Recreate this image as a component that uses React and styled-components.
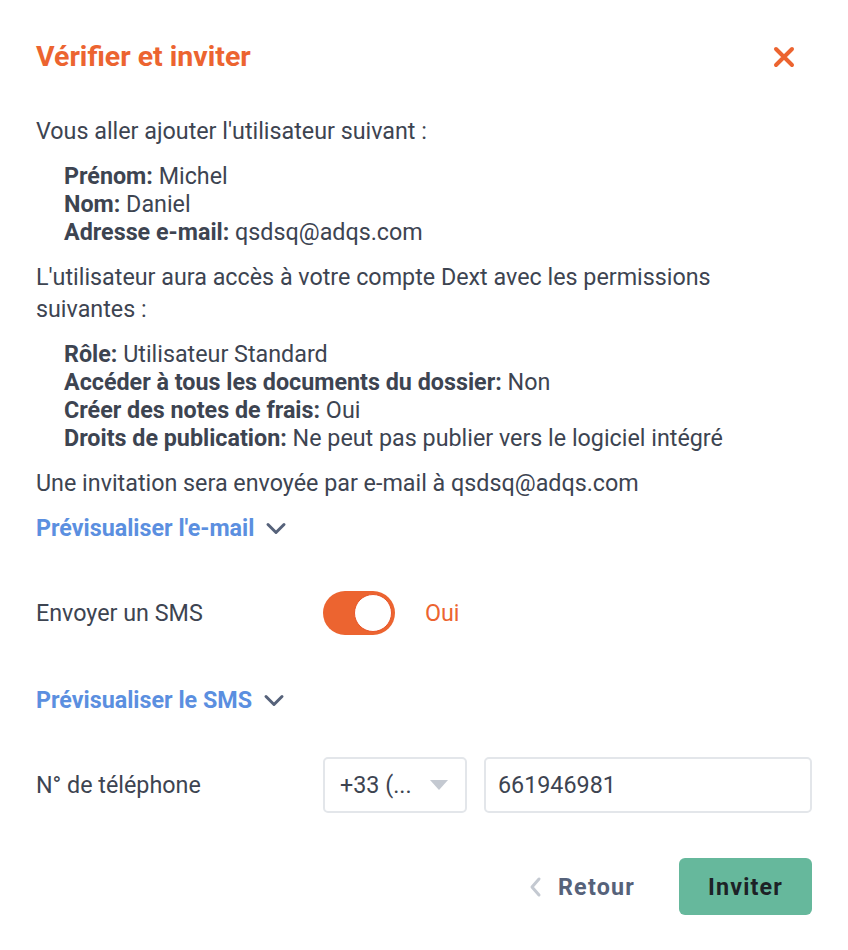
import React, { useState } from 'react'
import styled, { createGlobalStyle } from 'styled-components'

const GlobalStyle = createGlobalStyle`
  body {
    margin: 0;
    background: #fff;
    font-family: Roboto, "Liberation Sans", sans-serif;
    color: #3d4451;
  }
`

const Modal = styled.div`
  width: 848px;
  box-sizing: border-box;
  padding: 38px 36px 34px 36px;
  background: #fff;
`

const Header = styled.div`
  display: flex;
  justify-content: space-between;
  align-items: center;
  margin-bottom: 39px;
`

const Title = styled.h1`
  margin: 0;
  font-size: 28.5px;
  font-weight: 700;
  color: #ec6430;
  line-height: 38px;
`

const CloseButton = styled.button`
  border: 0;
  background: transparent;
  padding: 0;
  margin-right: 17px;
  display: flex;
  cursor: pointer;
`

const Paragraph = styled.p`
  margin: 0 0 15px 0;
  font-size: 23.3px;
  line-height: 32px;
`

const List = styled.div`
  padding-left: 28px;
  margin-bottom: 15px;
  font-size: 23.3px;
  line-height: 28px;
`

const Item = styled.div`
  b { font-weight: 700; }
`

const PreviewLink = styled.button`
  display: flex;
  align-items: center;
  gap: 11px;
  border: 0;
  background: transparent;
  padding: 0;
  font-family: inherit;
  font-size: 23.3px;
  font-weight: 700;
  color: #5b8fe0;
  cursor: pointer;
  line-height: 28px;
`

const FormRow = styled.div`
  display: grid;
  grid-template-columns: 287px 1fr;
  align-items: center;
  margin-top: ${p => p.top}px;
`

const Label = styled.div`
  font-size: 23.3px;
`

const ToggleWrap = styled.div`
  display: flex;
  align-items: center;
  gap: 30px;
`

const Toggle = styled.button`
  width: 72px;
  height: 44px;
  border-radius: 22px;
  border: 0;
  padding: 3px;
  box-sizing: border-box;
  background: #ec6430;
  display: flex;
  justify-content: ${p => (p.on ? 'flex-end' : 'flex-start')};
  cursor: pointer;
`

const Knob = styled.span`
  width: 38px;
  height: 38px;
  box-sizing: border-box;
  border-radius: 50%;
  border: 1px solid #e8562a;
  background: #fff;
`

const ToggleText = styled.span`
  font-size: 23.3px;
  color: #ec6430;
`

const PhoneFields = styled.div`
  display: flex;
  gap: 17px;
  min-width: 0;
`

const Select = styled.div`
  width: 144px;
  height: 56px;
  flex-shrink: 0;
  box-sizing: border-box;
  border: 2px solid #e3e6ea;
  border-radius: 5px;
  display: flex;
  align-items: center;
  justify-content: space-between;
  padding: 0 17px 0 15px;
  font-size: 23.3px;
`

const Input = styled.input`
  flex: 1;
  min-width: 0;
  width: 100%;
  height: 56px;
  box-sizing: border-box;
  border: 2px solid #e3e6ea;
  border-radius: 5px;
  padding: 0 12px;
  font-family: inherit;
  font-size: 23.3px;
  color: #3d4451;
  outline: none;
`

const Footer = styled.div`
  display: flex;
  justify-content: flex-end;
  align-items: center;
  gap: 44px;
  margin-top: 45px;
`

const BackButton = styled.button`
  display: flex;
  align-items: center;
  gap: 16px;
  border: 0;
  background: transparent;
  padding: 0;
  font-family: inherit;
  font-size: 23.3px;
  font-weight: 700;
  color: #56627a;
  letter-spacing: 1.2px;
  cursor: pointer;
`

const PrimaryButton = styled.button`
  width: 133px;
  height: 57px;
  border: 0;
  border-radius: 6px;
  background: #66b89c;
  font-family: inherit;
  font-size: 23.3px;
  font-weight: 700;
  letter-spacing: 1.2px;
  color: #1d2226;
  cursor: pointer;
`

const Chevron = ({ color = '#56627a' }) => (
  <svg width="22" height="13" viewBox="0 0 22 13">
    <path d="M3 2.5l8 8 8-8" fill="none" stroke={color} strokeWidth="3" strokeLinecap="round" strokeLinejoin="round" />
  </svg>
)

export default function App() {
  const [sms, setSms] = useState(true)

  return (
    <>
      <GlobalStyle />
      <Modal>
        <Header>
          <Title>Vérifier et inviter</Title>
          <CloseButton aria-label="Fermer">
            <svg width="22" height="22" viewBox="0 0 22 22">
              <path d="M3 3l16 16M19 3L3 19" stroke="#ec6430" strokeWidth="4" strokeLinecap="round" />
            </svg>
          </CloseButton>
        </Header>

        <Paragraph>Vous aller ajouter l'utilisateur suivant :</Paragraph>
        <List>
          <Item><b>Prénom:</b> Michel</Item>
          <Item><b>Nom:</b> Daniel</Item>
          <Item><b>Adresse e-mail:</b> qsdsq@adqs.com</Item>
        </List>

        <Paragraph>L'utilisateur aura accès à votre compte Dext avec les permissions suivantes :</Paragraph>
        <List>
          <Item><b>Rôle:</b> Utilisateur Standard</Item>
          <Item><b>Accéder à tous les documents du dossier:</b> Non</Item>
          <Item><b>Créer des notes de frais:</b> Oui</Item>
          <Item><b>Droits de publication:</b> Ne peut pas publier vers le logiciel intégré</Item>
        </List>

        <Paragraph>Une invitation sera envoyée par e-mail à qsdsq@adqs.com</Paragraph>
        <PreviewLink>
          Prévisualiser l'e-mail <Chevron />
        </PreviewLink>

        <FormRow top={49}>
          <Label>Envoyer un SMS</Label>
          <ToggleWrap>
            <Toggle on={sms ? 1 : 0} onClick={() => setSms(!sms)}>
              <Knob />
            </Toggle>
            <ToggleText>{sms ? 'Oui' : 'Non'}</ToggleText>
          </ToggleWrap>
        </FormRow>

        <FormRow top={51}>
          <PreviewLink>
            Prévisualiser le SMS <Chevron />
          </PreviewLink>
        </FormRow>

        <FormRow top={43}>
          <Label>N° de téléphone</Label>
          <PhoneFields>
            <Select>
              <span>+33 (...</span>
              <svg width="18" height="10" viewBox="0 0 18 10">
                <path d="M0 0h18L9 10z" fill="#c4c9d1" />
              </svg>
            </Select>
            <Input defaultValue="661946981" />
          </PhoneFields>
        </FormRow>

        <Footer>
          <BackButton>
            <svg width="14" height="22" viewBox="0 0 14 22">
              <path d="M11 3L4 11l7 8" fill="none" stroke="#c4c9d1" strokeWidth="3" strokeLinecap="round" strokeLinejoin="round" />
            </svg>
            Retour
          </BackButton>
          <PrimaryButton>Inviter</PrimaryButton>
        </Footer>
      </Modal>
    </>
  )
}
